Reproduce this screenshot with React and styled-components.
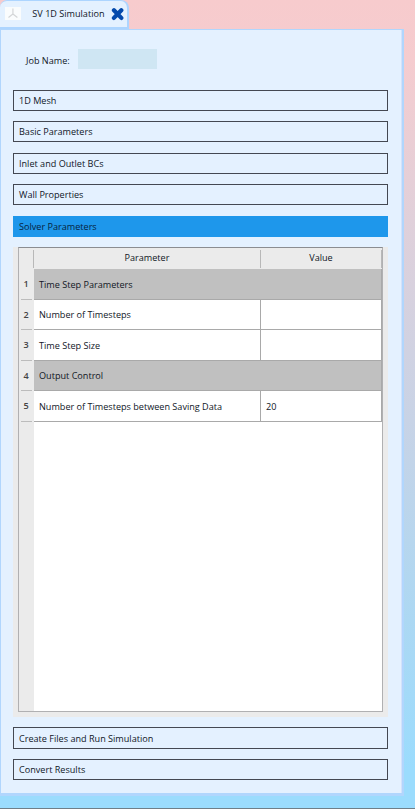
import React from "react";
import styled, { createGlobalStyle } from "styled-components";

const GlobalStyle = createGlobalStyle`
  * { box-sizing: border-box; }
  body { margin: 0; font-family: "Open Sans", "Noto Sans", sans-serif; font-size: 9.1px; color: #10161f; }
`;

const Desktop = styled.div`
  width: 415px;
  height: 809px;
  overflow: hidden;
  display: flex;
  flex-direction: column;
  background: linear-gradient(#f7cbcd 0, #f5cccf 60px, #e0d0da 220px, #c8d3e6 420px, #acd8f3 620px, #9bdcfd 770px);
  border-bottom: 1px solid #6f7f88;
`;

const Tab = styled.div`
  display: flex;
  align-items: center;
  flex: none;
  width: 129px;
  height: 29px;
  padding: 0 3px 1px 5px;
  background: #e4f1ff;
  border: solid #add5ff;
  border-width: 1px 2px 2px 0;
  border-radius: 7px 8px 0 0;
`;

const TabIcon = styled.svg`
  width: 16px;
  height: 13px;
  margin-right: 11px;
  background: #fafcfd;
`;

const TabTitle = styled.span`
  width: 79px;
  line-height: 14px;
  padding: 1px 0 0 0.5px;
  white-space: nowrap;
`;

const CloseIcon = styled.svg`
  width: 14px;
  height: 14px;
  margin: 1px 0 0 0;
`;

const Panel = styled.main`
  display: flex;
  flex-direction: column;
  flex: none;
  width: 404px;
  height: 767px;
  padding: 19px 12px 0;
  background: #e4f1ff;
  border: solid #b1d6fd;
  border-width: 1px 2px 3px 1px;
  box-shadow: inset -1px 0 #d3e1fb;
`;

const JobRow = styled.label`
  display: flex;
  align-items: center;
  height: 20px;
  padding-left: 13px;
`;

const JobLabel = styled.span`
  width: 52px;
  padding-top: 3px;
`;

const JobInput = styled.span`
  width: 79px;
  height: 20px;
  background: #cfe6f3;
`;

const Sections = styled.div`
  display: grid;
  grid-template-rows: 31px 32px 31px 32px 31px 480px 32px 22px;
  width: 375px;
  margin-top: 21px;
`;

const SectionButton = styled.div`
  height: ${(p) => (p.$tall ? 22 : 21)}px;
  padding-left: 5px;
  line-height: ${(p) => (p.$tall ? 21 : 20)}px;
  border: 1px solid ${(p) => (p.$active ? "#1e97eb" : "#444852")};
  background: ${(p) => (p.$active ? "#1e97eb" : "transparent")};
  color: ${(p) => (p.$active ? "#06233d" : "#10161f")};
`;

const TableArea = styled.div`
  height: 470px;
  padding: 0 5px 5px;
  background: #ebebeb;
`;

const TableFrame = styled.div`
  display: flex;
  flex-direction: column;
  height: 465px;
  border: 1px solid #b0b0b2;
  border-top-color: #8b8d91;
  background: linear-gradient(90deg, #ebebeb 15px, #fff 15px);
`;

const Header = styled.div`
  display: grid;
  grid-template-columns: 15px 227px 121px;
  height: 21px;
  padding-top: 2px;
  background: #ebebeb;
`;

const HeaderCell = styled.div`
  height: 18px;
  border-right: 1px solid #b8b8b8;
  text-align: center;
  line-height: 16px;
`;

const Row = styled.div`
  display: grid;
  grid-template-columns: 15px 227px 121px;
  grid-template-rows: 100%;
  height: ${(p) => p.$height}px;
  line-height: ${(p) => p.$height}px;
`;

const RowNumber = styled.div`
  width: 11px;
  margin-left: 2px;
  border-bottom: 1px solid #bcbcbc;
  text-align: center;
  font-weight: 600;
  padding-right: 1px;
  line-height: 29px;
  color: #444;
`;

const Cell = styled.div`
  grid-column: ${(p) => (p.$wide ? "span 2" : "auto")};
  padding-left: 5px;
  white-space: nowrap;
  background: ${(p) => (p.$wide ? "#c0c0c0" : "#fff")};
  border: solid #a9a9a9;
  border-width: 0 1px 1px 0;
`;

const before = ["1D Mesh", "Basic Parameters", "Inlet and Outlet BCs", "Wall Properties"];
const rows = [
  { name: "Time Step Parameters", group: true, height: 31 },
  { name: "Number of Timesteps", value: "", height: 30 },
  { name: "Time Step Size", value: "", height: 31 },
  { name: "Output Control", group: true, height: 30 },
  { name: "Number of Timesteps between Saving Data", value: "20", height: 31 },
];

export default function App() {
  return (
    <>
      <GlobalStyle />
      <Desktop>
        <Tab>
          <TabIcon viewBox="0 0 16 13" fill="none" stroke="#d3d5d7" strokeWidth="1.2">
            <path d="M8 1.5V7L3.5 10.5M8 7l4.5 3.5" />
          </TabIcon>
          <TabTitle>SV 1D Simulation</TabTitle>
          <CloseIcon viewBox="0 0 14 14" fill="none" stroke="#0449ac" strokeWidth="4.3" strokeLinecap="round">
            <path d="M4 3.3l7.4 7.6M11.4 3.3l-7.4 7.6" />
          </CloseIcon>
        </Tab>
        <Panel>
          <JobRow>
            <JobLabel>Job Name:</JobLabel>
            <JobInput />
          </JobRow>
          <Sections>
            {before.map((s) => (
              <SectionButton key={s}>{s}</SectionButton>
            ))}
            <SectionButton $active>Solver Parameters</SectionButton>
            <TableArea>
              <TableFrame>
                <Header>
                  <HeaderCell />
                  <HeaderCell>Parameter</HeaderCell>
                  <HeaderCell>Value</HeaderCell>
                </Header>
                {rows.map((r, i) => (
                  <Row key={r.name} $height={r.height}>
                    <RowNumber>{i + 1}</RowNumber>
                    <Cell $wide={r.group}>{r.name}</Cell>
                    {!r.group && <Cell>{r.value}</Cell>}
                  </Row>
                ))}
              </TableFrame>
            </TableArea>
            <SectionButton $tall>Create Files and Run Simulation</SectionButton>
            <SectionButton>Convert Results</SectionButton>
          </Sections>
        </Panel>
      </Desktop>
    </>
  );
}
